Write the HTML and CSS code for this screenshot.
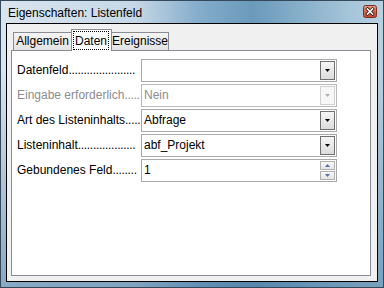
FILE: index.html
```html
<!DOCTYPE html>
<html>
<head>
<meta charset="utf-8">
<link rel="stylesheet" href="styles.css">
</head>
<body>
<div class="window">
  <div class="titlebar">
    <span class="title">Eigenschaften: Listenfeld</span>
    <span class="close">
      <svg width="14" height="13" viewBox="0 0 14 13">
        <defs>
          <linearGradient id="cg" x1="0" y1="0" x2="0" y2="1">
            <stop offset="0" stop-color="#eaa08c"/>
            <stop offset="0.5" stop-color="#d9684e"/>
            <stop offset="1" stop-color="#c24a2e"/>
          </linearGradient>
        </defs>
        <rect x="0.5" y="0.5" width="13" height="12" rx="2" fill="url(#cg)" stroke="#7a3020"/>
        <path d="M4.5 4L9.5 9M9.5 4L4.5 9" stroke="#3a1a14" stroke-width="3.2" stroke-linecap="square"/>
        <path d="M4.5 4L9.5 9M9.5 4L4.5 9" stroke="#ffffff" stroke-width="1.6" stroke-linecap="square"/>
      </svg>
    </span>
  </div>
  <div class="client">
    <div class="tabs">
      <div class="tab first">Allgemein</div>
      <div class="tab active"><span class="focus">Daten</span></div>
      <div class="tab last">Ereignisse</div>
    </div>
    <div class="panel">
      <div class="row">
        <div class="label">Datenfeld<span class="dots">......................</span></div>
        <div class="field">
          <span class="value"></span>
          <span class="drop"><svg width="5" height="3" viewBox="0 0 5 3"><path d="M0 0H5L2.5 3Z"/></svg></span>
        </div>
      </div>
      <div class="row disabled">
        <div class="label">Eingabe erforderlich<span class="dots">.....</span></div>
        <div class="field">
          <span class="value">Nein</span>
          <span class="drop"><svg width="5" height="3" viewBox="0 0 5 3"><path d="M0 0H5L2.5 3Z"/></svg></span>
        </div>
      </div>
      <div class="row">
        <div class="label">Art des Listeninhalts<span class="dots">.....</span></div>
        <div class="field">
          <span class="value">Abfrage</span>
          <span class="drop"><svg width="5" height="3" viewBox="0 0 5 3"><path d="M0 0H5L2.5 3Z"/></svg></span>
        </div>
      </div>
      <div class="row">
        <div class="label">Listeninhalt<span class="dots">...................</span></div>
        <div class="field">
          <span class="value">abf_Projekt</span>
          <span class="drop"><svg width="5" height="3" viewBox="0 0 5 3"><path d="M0 0H5L2.5 3Z"/></svg></span>
        </div>
      </div>
      <div class="row">
        <div class="label">Gebundenes Feld<span class="dots">........</span></div>
        <div class="field">
          <span class="value">1</span>
          <span class="spin">
            <span class="spin-btn"><svg width="5" height="3" viewBox="0 0 5 3"><path d="M0 3H5L2.5 0Z"/></svg></span>
            <span class="spin-btn"><svg width="5" height="3" viewBox="0 0 5 3"><path d="M0 0H5L2.5 3Z"/></svg></span>
          </span>
        </div>
      </div>
    </div>
  </div>
</div>
</body>
</html>
```

FILE: styles.css
```css
* {
  box-sizing: border-box;
}

body {
  margin: 0;
  font-family: "Liberation Sans", Arial, sans-serif;
  font-size: 12px;
  color: #000;
}

.window {
  width: 384px;
  height: 288px;
  border: 1px solid #34495a;
  display: flex;
  flex-direction: column;
  background:
    linear-gradient(to bottom, rgba(255, 255, 255, 0) 25%, rgba(70, 120, 160, 0.55) 100%),
    linear-gradient(to right, #d8e4ee 0%, #c6d8e6 35%, #84accb 52%, #6b9abb 66%, #8bb2cc 80%, #a7c6d9 92%, #b7d1e1 100%);
}

.titlebar {
  height: 22px;
  display: flex;
  align-items: flex-start;
  padding: 0 6px 0 7px;
}

.title {
  flex: 1;
  margin-top: 5px;
  line-height: 14px;
}

.close {
  display: block;
  margin-top: 4px;
  width: 14px;
  height: 13px;
}

.close svg {
  display: block;
}

.client {
  flex: 1;
  margin: 0 5px 5px;
  border: 1px solid #000;
  background: #f0f0f0;
  padding: 5px 6px 5px 4px;
  display: flex;
  flex-direction: column;
}

.tabs {
  display: flex;
  align-items: flex-end;
  padding-left: 2px;
  position: relative;
  z-index: 1;
}

.tab {
  height: 18px;
  border: 1px solid #898c95;
  border-bottom: 0;
  background: linear-gradient(#f4f4f4, #e3e3e3);
  line-height: 17px;
  text-align: center;
  white-space: nowrap;
}

.tab.first {
  width: 59px;
}

.tab.active {
  width: 41px;
  height: 22px;
  margin: 0 0 -1px -1px;
  padding-top: 1px;
  background: #fff;
  position: relative;
  z-index: 1;
}

.tab.last {
  width: 58px;
  margin-left: -1px;
}

.focus {
  display: block;
  margin: 0 2px 0 1px;
  border: 1px dotted #000;
  line-height: 16px;
  padding-top: 1px;
  height: 19px;
}

.panel {
  flex: 1;
  border: 1px solid #898c95;
  background: #fff;
  padding: 8px 0 0 5px;
}

.row {
  display: flex;
  height: 23px;
  margin-bottom: 2px;
}

.label {
  width: 124px;
  flex: none;
  white-space: nowrap;
  line-height: 23px;
}

.dots {
  letter-spacing: -0.3px;
}

.field {
  width: 196px;
  height: 23px;
  border: 1px solid #a9a9a9;
  display: flex;
  padding: 1px;
}

.value {
  flex: 1;
  line-height: 19px;
  padding-left: 1px;
}

.drop {
  width: 15px;
  border: 1px solid #707070;
  background: linear-gradient(#f5f5f5, #dcdcdc);
  display: flex;
  align-items: center;
  justify-content: center;
}

.drop svg {
  display: block;
  fill: #000;
}

.spin {
  width: 15px;
  display: flex;
  flex-direction: column;
  gap: 1px;
}

.spin-btn {
  height: 9px;
  border: 1px solid #b0b0b0;
  background: linear-gradient(#f8f8f8, #e4e4e4);
  display: flex;
  align-items: center;
  justify-content: center;
}

.spin-btn svg {
  display: block;
  fill: #4f6fa8;
}

.disabled .label,
.disabled .value {
  color: #8d8d8d;
}

.disabled .field {
  border-color: #b9b9b9;
}

.disabled .drop {
  border-color: #d0d0d0;
  background: #f7f7f7;
}

.disabled .drop svg {
  fill: #b0b0b0;
}
```
